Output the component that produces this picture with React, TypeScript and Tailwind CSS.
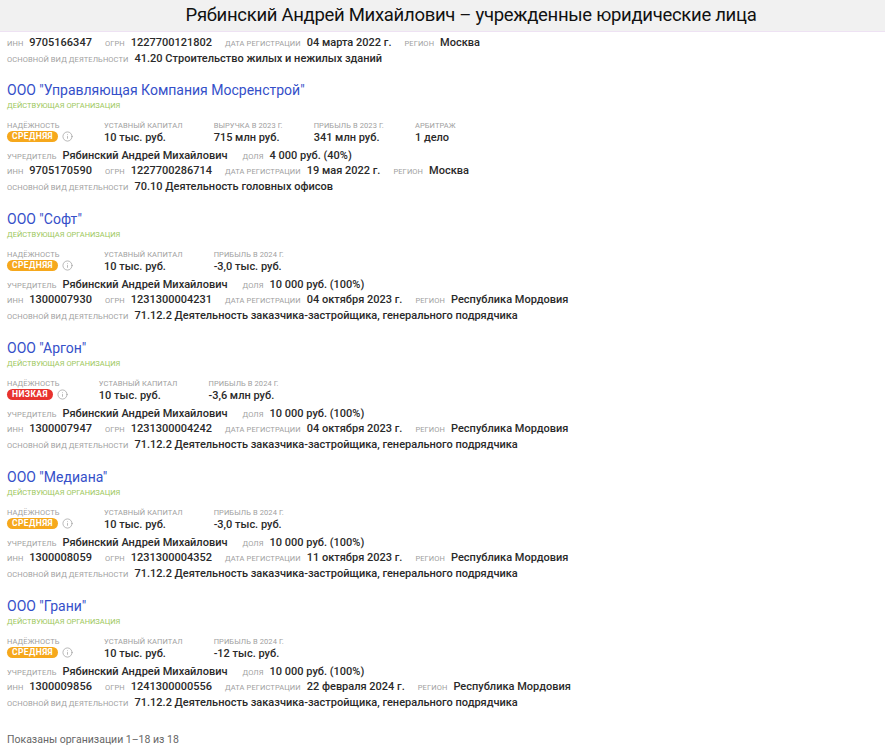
import { Info } from "lucide-react";

type Metric = { label: string; value: string };

type Org = {
  name: string;
  risk: "СРЕДНЯЯ" | "НИЗКАЯ";
  metrics: Metric[];
  share: string;
  inn: string;
  ogrn: string;
  date: string;
  region: string;
  activity: string;
};

const FOUNDER = "Рябинский Андрей Михайлович";
const MORDOVIA_ACT = "71.12.2 Деятельность заказчика-застройщика, генерального подрядчика";

const orgs: Org[] = [
  {
    name: 'ООО "Управляющая Компания Мосренстрой"',
    risk: "СРЕДНЯЯ",
    metrics: [
      { label: "Уставный капитал", value: "10 тыс. руб." },
      { label: "Выручка в 2023 г.", value: "715 млн руб." },
      { label: "Прибыль в 2023 г.", value: "341 млн руб." },
      { label: "Арбитраж", value: "1 дело" },
    ],
    share: "4 000 руб. (40%)",
    inn: "9705170590",
    ogrn: "1227700286714",
    date: "19 мая 2022 г.",
    region: "Москва",
    activity: "70.10 Деятельность головных офисов",
  },
  {
    name: 'ООО "Софт"',
    risk: "СРЕДНЯЯ",
    metrics: [
      { label: "Уставный капитал", value: "10 тыс. руб." },
      { label: "Прибыль в 2024 г.", value: "-3,0 тыс. руб." },
    ],
    share: "10 000 руб. (100%)",
    inn: "1300007930",
    ogrn: "1231300004231",
    date: "04 октября 2023 г.",
    region: "Республика Мордовия",
    activity: MORDOVIA_ACT,
  },
  {
    name: 'ООО "Аргон"',
    risk: "НИЗКАЯ",
    metrics: [
      { label: "Уставный капитал", value: "10 тыс. руб." },
      { label: "Прибыль в 2024 г.", value: "-3,6 млн руб." },
    ],
    share: "10 000 руб. (100%)",
    inn: "1300007947",
    ogrn: "1231300004242",
    date: "04 октября 2023 г.",
    region: "Республика Мордовия",
    activity: MORDOVIA_ACT,
  },
  {
    name: 'ООО "Медиана"',
    risk: "СРЕДНЯЯ",
    metrics: [
      { label: "Уставный капитал", value: "10 тыс. руб." },
      { label: "Прибыль в 2024 г.", value: "-3,0 тыс. руб." },
    ],
    share: "10 000 руб. (100%)",
    inn: "1300008059",
    ogrn: "1231300004352",
    date: "11 октября 2023 г.",
    region: "Республика Мордовия",
    activity: MORDOVIA_ACT,
  },
  {
    name: 'ООО "Грани"',
    risk: "СРЕДНЯЯ",
    metrics: [
      { label: "Уставный капитал", value: "10 тыс. руб." },
      { label: "Прибыль в 2024 г.", value: "-12 тыс. руб." },
    ],
    share: "10 000 руб. (100%)",
    inn: "1300009856",
    ogrn: "1241300000556",
    date: "22 февраля 2024 г.",
    region: "Республика Мордовия",
    activity: MORDOVIA_ACT,
  },
];

const Label = ({ children }: { children: React.ReactNode }) => (
  <span className="text-[7.5px] uppercase text-[#a0a0a0] tracking-[0.1px]">{children}</span>
);

const Value = ({ children }: { children: React.ReactNode }) => (
  <span className="text-[11px] font-medium text-[#2a2a2a]">{children}</span>
);

// one "label value" pair inside a line
const Pair = ({ label, value }: { label: string; value: string }) => (
  <span className="flex items-baseline gap-[6px]">
    <Label>{label}</Label>
    <Value>{value}</Value>
  </span>
);

const RegLine = ({ inn, ogrn, date, region }: { inn: string; ogrn: string; date: string; region: string }) => (
  <div className="flex items-baseline gap-[13px] h-[15px] leading-[15px]">
    <Pair label="инн" value={inn} />
    <Pair label="огрн" value={ogrn} />
    <Pair label="дата регистрации" value={date} />
    <Pair label="регион" value={region} />
  </div>
);

const ActivityLine = ({ activity }: { activity: string }) => (
  <div className="flex items-baseline h-[15px] leading-[15px] mt-[1px]">
    <Pair label="основной вид деятельности" value={activity} />
  </div>
);

const OrgBlock = ({ org }: { org: Org }) => (
  <div className="pb-[16px]">
    <div className="h-[18px] leading-[18px] text-[14px] text-[#3550c9]">{org.name}</div>
    <div className="h-[10px] leading-[10px] mt-[2px] text-[7.5px] uppercase text-[#9cc75a]">
      Действующая организация
    </div>

    <div className="flex gap-[31px] mt-[7px]">
      <div className="flex flex-col">
        <div className="h-[10px] leading-[10px]">
          <Label>Надёжность</Label>
        </div>
        <div className="flex items-center gap-[4px] h-[14px] mt-[1px]">
          <span
            className={`h-[11px] leading-[11px] px-[5px] rounded-full text-[8.5px] font-bold text-white tracking-[0.4px] ${
              org.risk === "НИЗКАЯ" ? "bg-[#e8322e]" : "bg-[#f6a81c]"
            }`}
          >
            {org.risk}
          </span>
          <Info size={11} strokeWidth={1.5} className="text-[#999]" />
        </div>
      </div>
      {org.metrics.map((m) => (
        <div key={m.label} className="flex flex-col">
          <div className="h-[10px] leading-[10px]">
            <Label>{m.label}</Label>
          </div>
          <div className="h-[14px] leading-[14px] mt-[1px]">
            <Value>{m.value}</Value>
          </div>
        </div>
      ))}
    </div>

    <div className="flex items-baseline gap-[15px] h-[15px] leading-[15px] mt-[5px]">
      <Pair label="учредитель" value={FOUNDER} />
      <Pair label="доля" value={org.share} />
    </div>
    <RegLine inn={org.inn} ogrn={org.ogrn} date={org.date} region={org.region} />
    <ActivityLine activity={org.activity} />
  </div>
);

export default function App() {
  return (
    <div className="w-[885px] h-[748px] bg-white overflow-hidden font-['Roboto',sans-serif]">
      {/* Header */}
      <div className="h-[32px] bg-[#f1f1f1] border-b border-[#eee2f3] flex items-center justify-center pl-[57px]">
        <span className="text-[18.5px] text-[#111] tracking-[-0.3px]">
          Рябинский Андрей Михайлович – учрежденные юридические лица
        </span>
      </div>

      <div className="px-[7px]">
        {/* tail of previous entry */}
        <div className="pt-[3px] pb-[15px]">
          <RegLine inn="9705166347" ogrn="1227700121802" date="04 марта 2022 г." region="Москва" />
          <ActivityLine activity="41.20 Строительство жилых и нежилых зданий" />
        </div>

        {orgs.map((o) => (
          <OrgBlock key={o.name} org={o} />
        ))}

        <div className="mt-[6px] text-[10.5px] leading-[16px] text-[#666]">
          Показаны организации 1–18 из 18
        </div>
      </div>
    </div>
  );
}
